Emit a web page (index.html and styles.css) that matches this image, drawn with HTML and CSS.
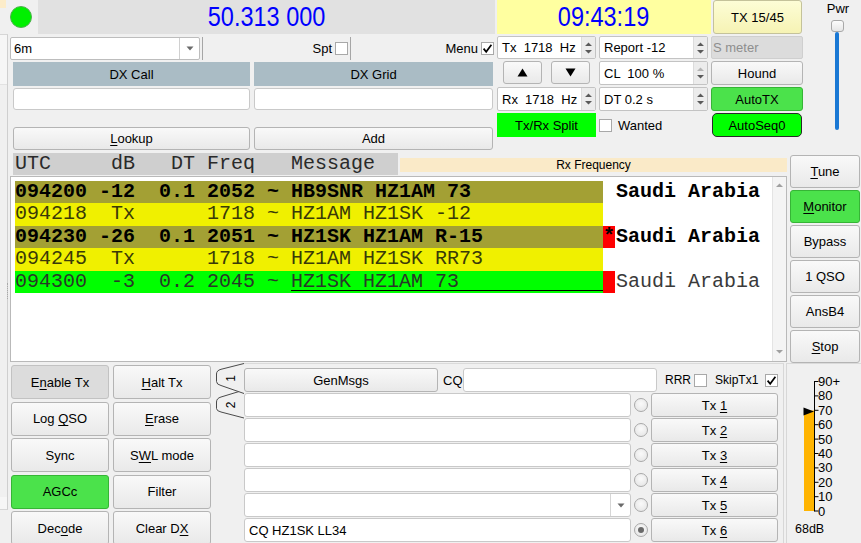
FILE: index.html
```html
<!DOCTYPE html>
<html>
<head>
<meta charset="utf-8">
<link rel="stylesheet" href="styles.css">
</head>
<body>
<div class="page">
  <div class="sliver">
    <div class="sl-top"></div>
    <div class="sl-bar">
      <div class="sl-up"></div>
      <div class="sl-grip"></div>
      <div class="sl-dn"></div>
    </div>
  </div>
  <div class="main">
    <div class="top">
      <div class="tl">
        <div class="r1">
          <div class="led-cell"><div class="led"></div></div>
          <div class="freq"><span class="bigtxt">50.313 000</span></div>
        </div>
        <div class="r2">
          <div class="combo band">
            <span class="ctext">6m</span>
            <span class="carrow"><svg width="8" height="5" viewBox="0 0 8 5"><path d="M0.5 0.5H7.5L4 4.5Z" fill="#6a6a6a"/></svg></span>
          </div>
          <div class="cellbox spt"><span class="lbl">Spt</span><span class="chk"></span></div>
          <div class="cellbox menu"><span class="lbl">Menu</span><span class="chk"><svg width="13" height="13" viewBox="0 0 13 13"><path d="M2.6 6.6L5.2 9.8L10.4 2.8" fill="none" stroke="#000" stroke-width="1.7"/></svg></span></div>
        </div>
        <div class="r3"><div class="hdr w1">DX Call</div><div class="hdr w2">DX Grid</div></div>
        <div class="r4"><div class="inp w1"></div><div class="inp w2"></div></div>
        <div class="r5"><div class="btn w1"><span><u>L</u>ookup</span></div><div class="btn w2">Add</div></div>
      </div>
      <div class="tr">
        <div class="clock"><span class="bigtxt">09:43:19</span></div>
        <div class="btn txslot">TX 15/45</div>
        <div class="spin"><span class="stxt">Tx  1718  Hz</span><span class="sarr"><svg width="9" height="16" viewBox="0 0 9 16"><path d="M1 6L4.5 2.5L8 6Z M1 10L4.5 13.5L8 10Z" fill="#5a5a5a"/></svg></span></div>
        <div class="spin"><span class="stxt">Report -12</span><span class="sarr"><svg width="9" height="16" viewBox="0 0 9 16"><path d="M1 6L4.5 2.5L8 6Z M1 10L4.5 13.5L8 10Z" fill="#5a5a5a"/></svg></span></div>
        <div class="smeter">S meter</div>
        <div class="arrows">
          <div class="btn ab"><svg width="11" height="9" viewBox="0 0 11 9"><path d="M0.5 8.5L5.5 0.5L10.5 8.5Z" fill="#000"/></svg></div>
          <div class="btn ab"><svg width="11" height="9" viewBox="0 0 11 9"><path d="M0.5 0.5L5.5 8.5L10.5 0.5Z" fill="#000"/></svg></div>
        </div>
        <div class="spin"><span class="stxt">CL  100 %</span><span class="sarr"><svg width="9" height="16" viewBox="0 0 9 16"><path d="M1 6L4.5 2.5L8 6Z" fill="#b4b4b4"/><path d="M1 10L4.5 13.5L8 10Z" fill="#5a5a5a"/></svg></span></div>
        <div class="btn">Hound</div>
        <div class="spin"><span class="stxt">Rx  1718  Hz</span><span class="sarr"><svg width="9" height="16" viewBox="0 0 9 16"><path d="M1 6L4.5 2.5L8 6Z M1 10L4.5 13.5L8 10Z" fill="#5a5a5a"/></svg></span></div>
        <div class="spin"><span class="stxt">DT 0.2 s</span><span class="sarr"><svg width="9" height="16" viewBox="0 0 9 16"><path d="M1 6L4.5 2.5L8 6Z M1 10L4.5 13.5L8 10Z" fill="#5a5a5a"/></svg></span></div>
        <div class="btn green">AutoTX</div>
        <div class="split">Tx/Rx Split</div>
        <div class="wanted"><span class="chk"></span><span class="lbl">Wanted</span></div>
        <div class="btn seq">AutoSeq0</div>
      </div>
      <div class="pwr">
        <div class="pwr-lbl">Pwr</div>
        <div class="slider">
          <div class="handle"></div>
          <div class="groove"></div>
        </div>
      </div>
    </div>

    <div class="mid">
      <div class="msg">
        <div class="mhead">
          <div class="colhdr">UTC     dB   DT Freq   Message</div>
          <div class="rxf">Rx Frequency</div>
        </div>
        <div class="mbox">
          <div class="rows">
            <div class="row"><div class="c olive b">094200 -12  0.1 2052 ~ HB9SNR HZ1AM 73</div><div class="mk"></div><div class="cty b">Saudi Arabia</div></div>
            <div class="row"><div class="c yel">094218  Tx      1718 ~ HZ1AM HZ1SK -12</div><div class="mk"></div><div class="cty"></div></div>
            <div class="row"><div class="c olive b">094230 -26  0.1 2051 ~ HZ1SK HZ1AM R-15</div><div class="mk red b">*</div><div class="cty b">Saudi Arabia</div></div>
            <div class="row"><div class="c yel">094245  Tx      1718 ~ HZ1AM HZ1SK RR73</div><div class="mk"></div><div class="cty"></div></div>
            <div class="row"><div class="c grn"><span>094300  -3  0.2 2045 ~ </span><span class="ul">HZ1SK HZ1AM 73</span></div><div class="mk red"></div><div class="cty lt">Saudi Arabia</div></div>
          </div>
          <div class="vscroll">
            <svg width="9" height="6" viewBox="0 0 9 6"><path d="M1 5L4.5 1.5L8 5Z" fill="#a0a0a0"/></svg>
            <svg width="9" height="6" viewBox="0 0 9 6"><path d="M1 1L4.5 4.5L8 1Z" fill="#a0a0a0"/></svg>
          </div>
        </div>
      </div>
      <div class="rbtns">
        <div class="btn"><span><u>T</u>une</span></div>
        <div class="btn green"><span><u>M</u>onitor</span></div>
        <div class="btn">Bypass</div>
        <div class="btn">1 QSO</div>
        <div class="btn">AnsB4</div>
        <div class="btn"><span><u>S</u>top</span></div>
      </div>
    </div>

    <div class="bot">
      <div class="lgrid">
        <div class="btn pressed"><span>E<u>n</u>able Tx</span></div>
        <div class="btn"><span><u>H</u>alt Tx</span></div>
        <div class="btn"><span>Log <u>Q</u>SO</span></div>
        <div class="btn"><span><u>E</u>rase</span></div>
        <div class="btn">Sync</div>
        <div class="btn"><span>S<u>W</u>L mode</span></div>
        <div class="btn green">AGCc</div>
        <div class="btn">Filter</div>
        <div class="btn"><span>Dec<u>o</u>de</span></div>
        <div class="btn"><span>Clear D<u>X</u></span></div>
      </div>
      <div class="tabs">
        <svg width="33" height="60" viewBox="0 0 33 60">
          <path d="M33 27 L10 34 Q5.5 35.3 5.5 39 L5.5 45.5 Q5.5 48 10 49 L33 55 Z" fill="#f0f0f0"/>
          <path d="M33 27 L10 34 Q5.5 35.3 5.5 39 L5.5 45.5 Q5.5 48 10 49 L33 55" fill="none" stroke="#4a4a4a" stroke-width="1"/>
          <path d="M33 0.5 L10 6.3 Q5.5 7.5 5.5 11 L5.5 18.5 Q5.5 21.5 10 22.5 L33 30.5 Z" fill="#f0f0f0"/>
          <path d="M33 0.5 L10 6.3 Q5.5 7.5 5.5 11 L5.5 18.5 Q5.5 21.5 10 22.5 L33 30.5" fill="none" stroke="#4a4a4a" stroke-width="1"/>
          <text x="0" y="0" transform="translate(19.5 15.5) rotate(-90)" text-anchor="middle" dominant-baseline="central" font-family="Liberation Sans, Arial, sans-serif" font-size="12" fill="#000">1</text>
          <text x="0" y="0" transform="translate(19.5 42) rotate(-90)" text-anchor="middle" dominant-baseline="central" font-family="Liberation Sans, Arial, sans-serif" font-size="12" fill="#000">2</text>
        </svg>
      </div>
      <div class="tabc">
        <div class="trow r0">
          <div class="btn gen">GenMsgs</div>
          <span class="cq">CQ</span>
          <div class="inp cqin"></div>
          <span class="lbl rrr">RRR</span><span class="chk c1"></span>
          <span class="lbl skip">SkipTx1</span><span class="chk c2"><svg width="13" height="13" viewBox="0 0 13 13"><path d="M2.6 6.6L5.2 9.8L10.4 2.8" fill="none" stroke="#000" stroke-width="1.7"/></svg></span>
        </div>
        <div class="trow"><div class="inp txm"></div><span class="radio"></span><div class="btn txb"><span>Tx <u>1</u></span></div></div>
        <div class="trow"><div class="inp txm"></div><span class="radio"></span><div class="btn txb"><span>Tx <u>2</u></span></div></div>
        <div class="trow"><div class="inp txm"></div><span class="radio"></span><div class="btn txb"><span>Tx <u>3</u></span></div></div>
        <div class="trow"><div class="inp txm"></div><span class="radio"></span><div class="btn txb"><span>Tx <u>4</u></span></div></div>
        <div class="trow"><div class="inp txm combo5"><span class="c5arrow"><svg width="8" height="5" viewBox="0 0 8 5"><path d="M0.5 0.5H7.5L4 4.5Z" fill="#6a6a6a"/></svg></span></div><span class="radio"></span><div class="btn txb"><span>Tx <u>5</u></span></div></div>
        <div class="trow"><div class="inp txm">CQ HZ1SK LL34</div><span class="radio on"></span><div class="btn txb"><span>Tx <u>6</u></span></div></div>
      </div>
      <div class="meter">
        <svg width="74" height="180" viewBox="0 0 74 180">
          <rect x="17" y="47.5" width="10" height="100.5" fill="#ffb400"/>
          <line x1="27.5" y1="18" x2="27.5" y2="148.5" stroke="#000" stroke-width="1"/>
          <g stroke="#000" stroke-width="1">
            <line x1="27.5" y1="18.5" x2="31.5" y2="18.5"/>
            <line x1="27.5" y1="32.9" x2="31.5" y2="32.9"/>
            <line x1="27.5" y1="47.3" x2="31.5" y2="47.3"/>
            <line x1="27.5" y1="61.7" x2="31.5" y2="61.7"/>
            <line x1="27.5" y1="76.1" x2="31.5" y2="76.1"/>
            <line x1="27.5" y1="90.5" x2="31.5" y2="90.5"/>
            <line x1="27.5" y1="104.9" x2="31.5" y2="104.9"/>
            <line x1="27.5" y1="119.3" x2="31.5" y2="119.3"/>
            <line x1="27.5" y1="133.7" x2="31.5" y2="133.7"/>
            <line x1="27.5" y1="148" x2="31.5" y2="148"/>
          </g>
          <path d="M16.5 44.5 L27 48.5 L16.5 52.5 Z" fill="#000"/>
          <g font-family="Liberation Sans, Arial, sans-serif" font-size="13" fill="#000">
            <text x="31" y="23">90+</text>
            <text x="31" y="37.4">80</text>
            <text x="31" y="51.8">70</text>
            <text x="31" y="66.2">60</text>
            <text x="31" y="80.6">50</text>
            <text x="31" y="95">40</text>
            <text x="31" y="109.4">30</text>
            <text x="31" y="123.8">20</text>
            <text x="31" y="138.2">10</text>
            <text x="31" y="152.6">0</text>
          </g>
          <text x="8" y="170" font-family="Liberation Sans, Arial, sans-serif" font-size="12.5" fill="#000">68dB</text>
        </svg>
      </div>
    </div>
  </div>
</div>
</body>
</html>
```

FILE: styles.css
```css
* { box-sizing: border-box; }
html, body { margin: 0; padding: 0; }
body {
  width: 861px;
  height: 543px;
  overflow: hidden;
  background: #f0f0f0;
  font-family: "Liberation Sans", Arial, sans-serif;
  font-size: 13px;
  color: #000;
}
u { text-decoration: underline; text-underline-offset: 2px; }

.page { display: flex; height: 543px; }

/* left sliver of neighbouring pane */
.sliver { width: 9px; flex: none; display: flex; flex-direction: column; }
.sl-top { height: 8px; width: 6px; background: #fcecc9; }
.sl-bar {
  margin-top: 26px;
  height: 476px;
  width: 8px;
  border-right: 1px solid #cfcfcf;
  border-top: 1px solid #d6d6d6;
  border-bottom: 1px solid #d6d6d6;
  display: flex;
  flex-direction: column;
  justify-content: space-between;
}
.sl-up { height: 50px; width: 7px; background: #f6f6f6; border-bottom: 1px solid #e2e2e2; }
.sl-grip { height: 16px; width: 2px; margin-left: 7px; border-left: 1px dotted #a8a8a8; }
.sl-dn { height: 12px; width: 7px; background: #f6f6f6; }

.main { width: 852px; flex: none; display: flex; flex-direction: column; }

/* ---------- top ---------- */
.top { height: 153px; display: flex; flex: none; }
.tl { width: 486px; flex: none; }
.r1 { display: flex; height: 34px; }
.led-cell { width: 29px; display: flex; align-items: center; }
.led { width: 22px; height: 22px; margin-left: 1px; border-radius: 50%; background: #00f000; border: 1px solid #50b050; }
.freq {
  width: 457px;
  background: #e1e1e1;
  display: flex;
  align-items: center;
  justify-content: center;
}
.bigtxt {
  display: inline-block;
  font-size: 27px;
  color: #0000ff;
  transform: scaleX(0.87);
  line-height: 30px;
}
.r2 { display: flex; height: 23px; margin-top: 3px; }
.combo {
  background: #fff;
  border: 1px solid #bdbdbd;
  border-radius: 2px;
  display: flex;
  align-items: center;
}
.band { width: 190px; margin-left: 1px; }
.ctext { flex: 1; padding-left: 3px; }
.carrow {
  width: 20px;
  height: 100%;
  border-left: 1px solid #d0d0d0;
  display: flex;
  align-items: center;
  justify-content: center;
}
.cellbox {
  border-left: 1px solid #a6a6a6;
  display: flex;
  align-items: center;
  justify-content: flex-end;
  gap: 3px;
}
.spt { width: 148px; margin-left: 2px; padding-right: 2px; }
.menu { width: 145px; padding-right: 1px; }
.chk {
  width: 13px;
  height: 13px;
  flex: none;
  background: #fff;
  border: 1px solid #a8a8a8;
  display: inline-flex;
  align-items: center;
  justify-content: center;
}
.chk svg { display: block; margin: -1px; }

.r3, .r4, .r5 { display: flex; gap: 4px; padding-left: 4px; }
.r3 { height: 24px; margin-top: 2px; }
.r4 { height: 22px; margin-top: 2px; }
.r5 { height: 23px; margin-top: 17px; }
.w1 { width: 237px; }
.w2 { width: 239px; }
.hdr {
  background: #aabcc5;
  display: flex;
  align-items: center;
  justify-content: center;
}
.inp {
  background: #fff;
  border: 1px solid #c9c9c9;
  border-radius: 3px;
}

.btn {
  background: linear-gradient(#f9f9f9, #e9e9e9);
  border: 1px solid #b4b4b4;
  border-radius: 3px;
  display: flex;
  align-items: center;
  justify-content: center;
  white-space: nowrap;
}
.btn.green { background: #4be24b; border-color: #36b536; }
.btn.pressed { background: #dcdcdc; border-color: #c2c2c2; }

/* top-right grid */
.tr {
  width: 306px;
  margin-left: 2px;
  flex: none;
  display: grid;
  grid-template-columns: 99px 109px 92px;
  grid-template-rows: 34px 23px 24px 24px 24px;
  column-gap: 3px;
  row-gap: 2px;
}
.clock {
  grid-column: 1 / 3;
  margin-right: -3px;
  background: #ffffa0;
  display: flex;
  align-items: center;
  justify-content: center;
}
.txslot {
  margin-left: 2px;
  margin-right: 1px;
  background: linear-gradient(#fdfdd6, #f6f3b4);
  border-color: #c4c29a;
}
.spin {
  background: #fff;
  border: 1px solid #c3c3c3;
  border-radius: 2px;
  display: flex;
  align-items: center;
}
.stxt { flex: 1; padding-left: 4px; white-space: pre; }
.sarr {
  width: 14px;
  height: 100%;
  background: #ececec;
  border-left: 1px solid #dcdcdc;
  display: flex;
  align-items: center;
  justify-content: center;
}
.smeter {
  background: #dcdcdc;
  border: 1px solid #cfcfcf;
  border-radius: 2px;
  color: #8e8e8e;
  display: flex;
  align-items: center;
  padding-left: 1px;
}
.arrows { display: flex; gap: 9px; padding-left: 6px; }
.ab { width: 39px; height: 23px; }
.split {
  background: #00ff00;
  display: flex;
  align-items: center;
  justify-content: center;
}
.wanted { display: flex; align-items: center; gap: 6px; }
.seq {
  background: #00ff00;
  border: 1px solid #2a2a2a;
  border-radius: 5px;
  margin: 0 1px;
}

.pwr { width: 58px; flex: none; display: flex; flex-direction: column; align-items: center; }
.pwr-lbl { margin-top: 1px; height: 16px; line-height: 16px; margin-left: 12px; }
.slider { width: 14px; margin-left: 10px; margin-top: 3px; display: flex; flex-direction: column; align-items: center; }
.handle {
  width: 13px;
  height: 12px;
  border: 1px solid #a9a9a9;
  border-radius: 3px;
  background: linear-gradient(#fcfcfc, #e6e6e6);
}
.groove { width: 4px; height: 98px; background: #1a78d4; border-radius: 2px; }

/* ---------- middle ---------- */
.mid { display: flex; height: 210px; flex: none; }
.msg { width: 777px; margin-left: 1px; flex: none; display: flex; flex-direction: column; }
.mhead { height: 23px; display: flex; align-items: center; }
.colhdr {
  width: 385px;
  height: 22px;
  margin-left: 3px;
  align-self: flex-start;
  padding-left: 2px;
  background: #cfcfcf;
  font-family: "Liberation Mono", "Courier New", monospace;
  font-size: 20px;
  line-height: 22px;
  white-space: pre;
  color: #2a2a2a;
}
.rxf {
  width: 387px;
  height: 14px;
  margin-left: 2px;
  background: #faeac8;
  font-size: 12px;
  line-height: 14px;
  text-align: center;
}
.mbox {
  height: 186px;
  background: #fff;
  border: 1px solid #b9b9b9;
  display: flex;
}
.rows { flex: 1; padding: 4px 0 0 4px; }
.row {
  display: flex;
  height: 22.4px;
  font-family: "Liberation Mono", "Courier New", monospace;
  font-size: 20px;
  line-height: 22.4px;
  white-space: pre;
}
.c { width: 588px; flex: none; display: flex; }
.olive { background: #a3a034; color: #000; }
.yel { background: #f0f000; color: #3a3a08; }
.grn { background: #00ff00; color: #283828; }
.b { font-weight: bold; }
.ul {
  flex: 1;
  background: linear-gradient(#000, #000) no-repeat 0 19px / 100% 1px;
}
.mk { width: 12px; flex: none; }
.mk.red { background: #ff0000; color: #000; }
.cty { margin-left: 1px; color: #000; }
.cty.lt { color: #3a3a3a; }
.vscroll {
  width: 14px;
  flex: none;
  background: #f4f4f4;
  border-left: 1px solid #e4e4e4;
  display: flex;
  flex-direction: column;
  justify-content: space-between;
  align-items: center;
  padding: 5px 0 6px;
}
.vscroll svg { display: block; }

.rbtns {
  width: 70px;
  margin-left: 3px;
  padding-top: 2px;
  display: flex;
  flex-direction: column;
  gap: 2px;
  flex: none;
}
.rbtns .btn { height: 33px; }

/* ---------- bottom ---------- */
.bot { display: flex; height: 180px; flex: none; }
.lgrid {
  width: 200px;
  margin: 2px 0 0 2px;
  flex: none;
  display: grid;
  grid-template-columns: 98px 98px;
  grid-auto-rows: 34px;
  column-gap: 4px;
  row-gap: 2.6px;
}
.tabs { width: 33px; flex: none; }
.tabs svg { display: block; }
.tabc {
  width: 540px;
  flex: none;
  border-right: 1px solid #d7d7d7;
  border-top: 1px solid #dadada;
  padding-top: 4px;
}
.trow { display: flex; align-items: center; height: 24px; margin-top: 1px; width: 534px; }
.trow > * { flex: none; }
.trow.r0 { margin-top: 0; }
.gen { width: 194px; height: 24px; }
.cq { width: 25px; padding-left: 5px; }
.cqin { width: 194px; height: 24px; }
.rrr { margin-left: 8px; width: 26px; font-size: 12px; }
.c1 { margin-left: 3px; }
.skip { margin-left: 8px; width: 44px; font-size: 12px; }
.c2 { margin-left: 6px; }
.txm { width: 387px; height: 24px; display: flex; align-items: center; padding-left: 4px; }
.combo5 { justify-content: flex-end; padding-left: 0; }
.c5arrow {
  width: 20px;
  height: 100%;
  border-left: 1px solid #d6d6d6;
  display: flex;
  align-items: center;
  justify-content: center;
}
.radio {
  width: 14px;
  height: 14px;
  margin-left: 3px;
  border-radius: 50%;
  border: 1px solid #a9a9a9;
  background: radial-gradient(circle at 50% 40%, #fafafa, #e2e2e2);
  display: flex;
  align-items: center;
  justify-content: center;
}
.radio.on::after {
  content: "";
  width: 6px;
  height: 6px;
  border-radius: 50%;
  background: #6a6a6a;
}
.txb { width: 127px; height: 24px; margin-left: 3px; }

.meter {
  width: 75px;
  margin-left: 2px;
  flex: none;
  border-left: 1px solid #d7d7d7;
  border-top: 1px solid #dadada;
}
.meter svg { display: block; margin-top: -1px; }
```
